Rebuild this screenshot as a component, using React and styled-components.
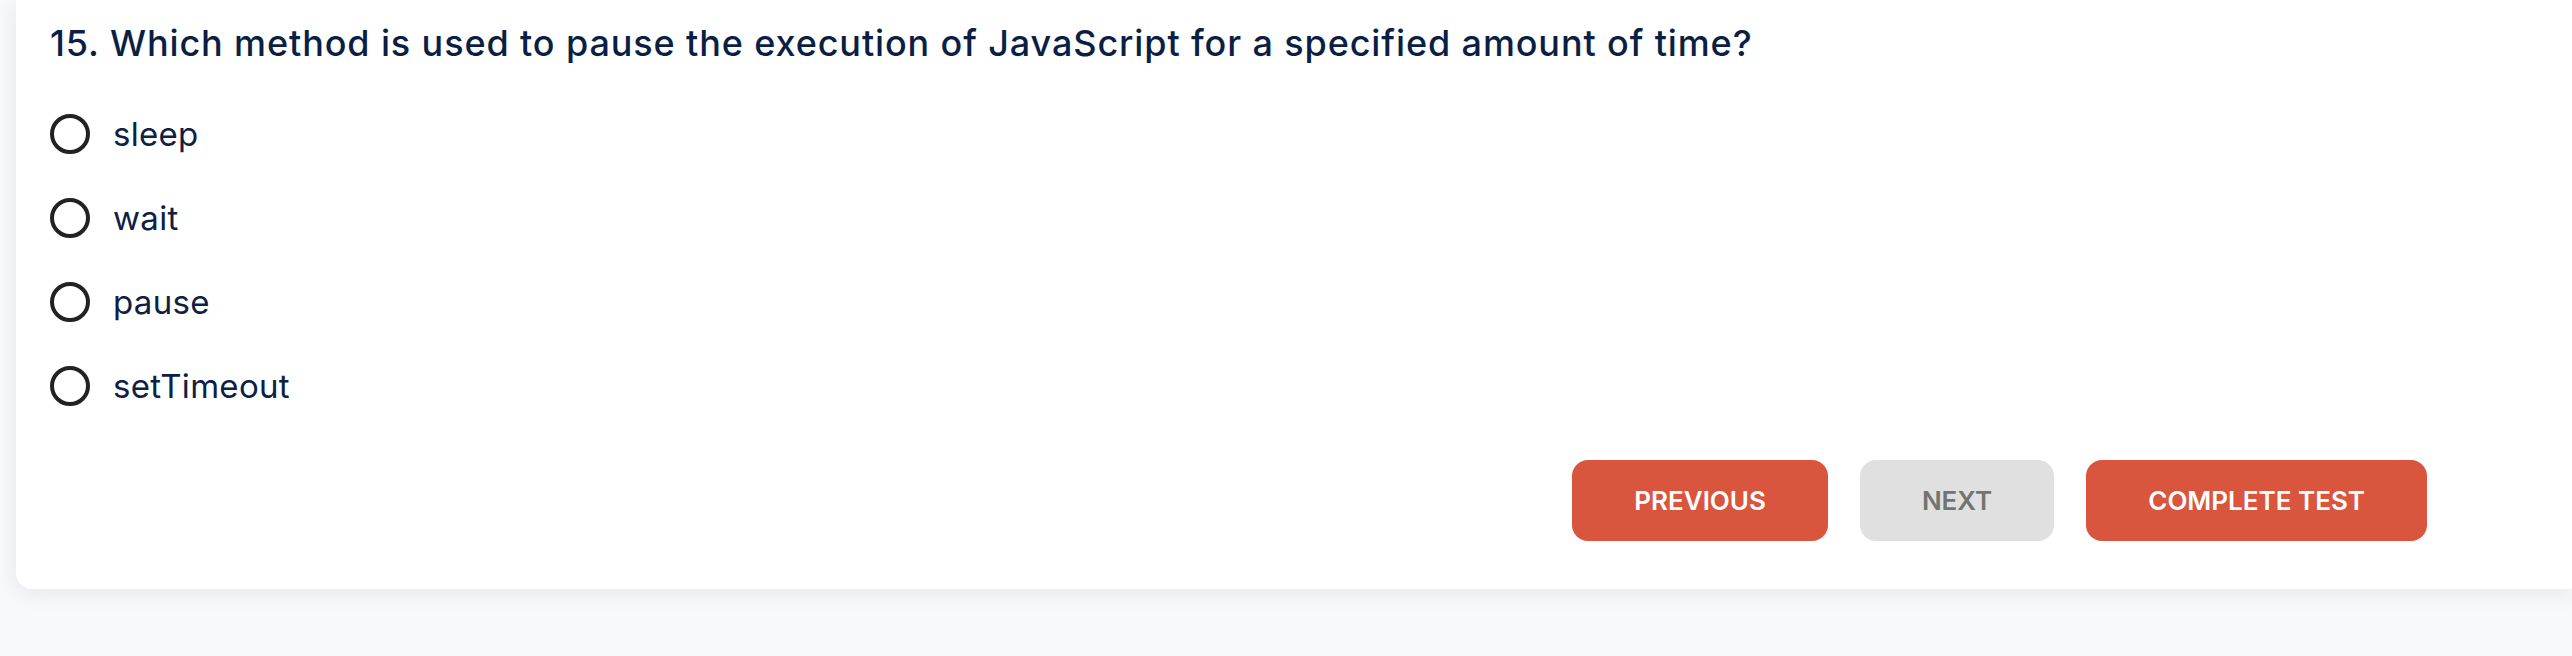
import styled, { createGlobalStyle } from "styled-components";

const Global = createGlobalStyle`
  body {
    margin: 0;
    background: #f8f9fb;
    font-family: Inter, "Noto Sans", sans-serif;
    overflow: hidden;
  }
`;

const options = ["sleep", "wait", "pause", "setTimeout"];

const App = () => {
  return (
    <>
      <Global />
      <Page>
        <Card>
          <Question>
            15. Which method is used to pause the execution of JavaScript for a
            specified amount of time?
          </Question>
          <OptionList>
            {options.map((opt) => (
              <Option key={opt}>
                <Radio />
                <OptionText>{opt}</OptionText>
              </Option>
            ))}
          </OptionList>
          <Actions>
            <Button>PREVIOUS</Button>
            <Button disabled>NEXT</Button>
            <Button>COMPLETE TEST</Button>
          </Actions>
        </Card>
      </Page>
    </>
  );
};

const Page = styled.div`
  height: 656px;
  padding-left: 16px;
`;

const Card = styled.div`
  background: #fff;
  border-radius: 0 0 0 16px;
  box-shadow: 0 4px 22px rgba(30, 40, 70, 0.09);
  padding: 16px 145px 48px 34px;
`;

const Question = styled.h2`
  margin: 0 0 22px;
  font-size: 36px;
  line-height: 54px;
  font-weight: 500;
  color: #0b1f44;
  letter-spacing: 0.88px;
`;

const OptionList = styled.div`
  display: flex;
  flex-direction: column;
`;

const Option = styled.label`
  display: flex;
  align-items: center;
  gap: 23px;
  padding: 22px 0;
  cursor: pointer;
`;

const Radio = styled.span`
  width: 40px;
  height: 40px;
  box-sizing: border-box;
  border: 4px solid #222;
  border-radius: 50%;
  flex-shrink: 0;
`;

const OptionText = styled.span`
  font-size: 33px;
  line-height: 40px;
  color: #0e2044;
  letter-spacing: 0.3px;
`;

const Actions = styled.div`
  display: flex;
  justify-content: flex-end;
  gap: 32px;
  margin-top: 32px;
`;

const Button = styled.button`
  border: none;
  border-radius: 16px;
  padding: 21px 62px;
  font-family: inherit;
  font-size: 26px;
  line-height: 39px;
  font-weight: 600;
  background: ${(p) => (p.disabled ? "#e0e0e0" : "#d9553d")};
  color: ${(p) => (p.disabled ? "#737373" : "#fff")};
  cursor: ${(p) => (p.disabled ? "default" : "pointer")};
`;

export default App;
